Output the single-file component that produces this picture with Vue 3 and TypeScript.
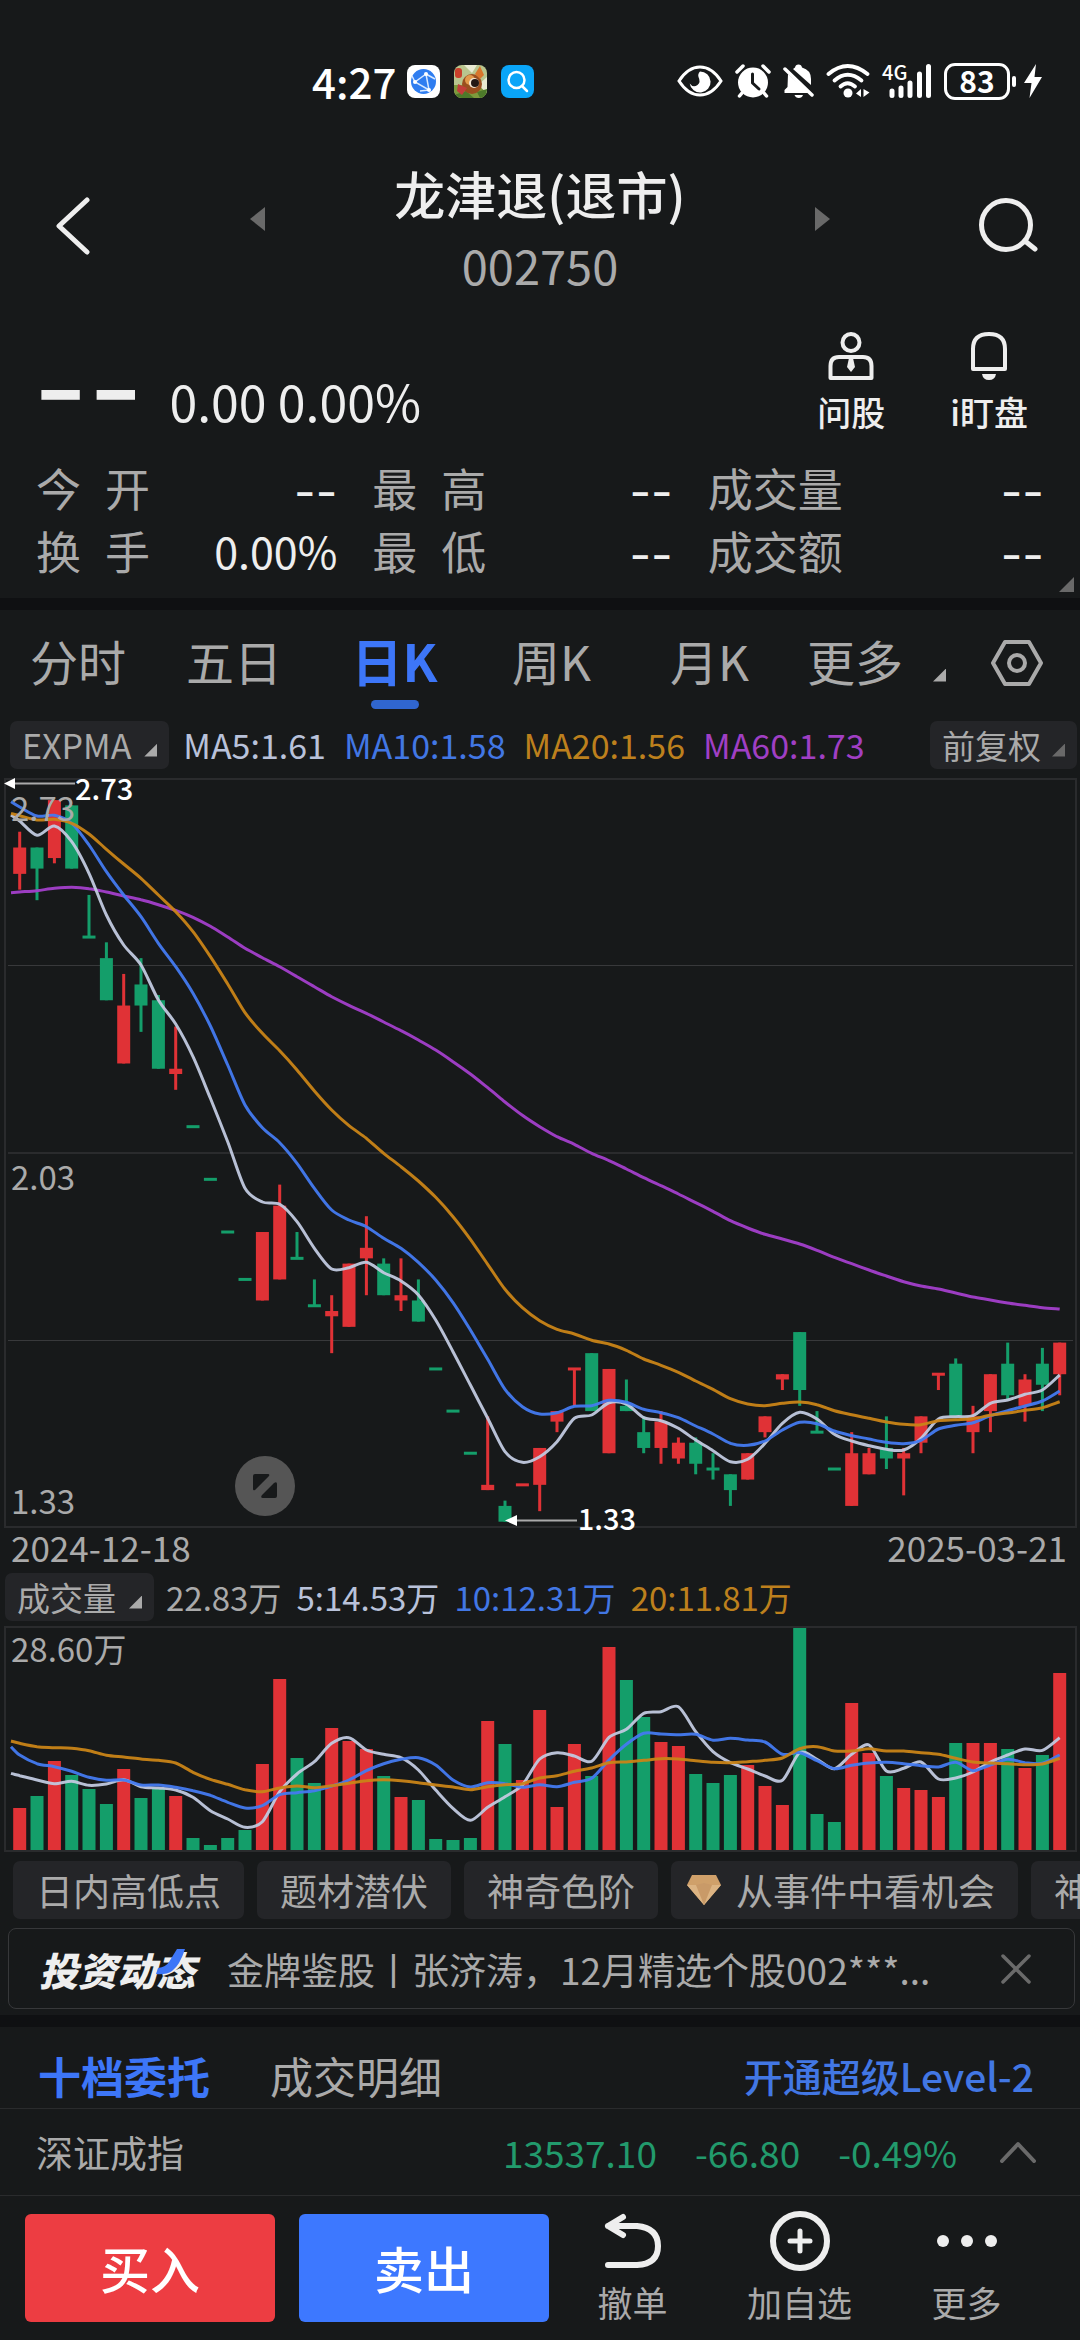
<script setup lang="ts">
type Tone = 'up' | 'down'
/** tone, body top, body bottom, high, low: in cents above the 1.33 floor */
type Candle = [Tone, number, number, number, number]

const u: Tone = 'up'
const d: Tone = 'down'

const candles: Candle[] = [
  [u, 128, 123, 131, 120], [d, 128, 124, 128, 118], [u, 137, 126, 137, 125], [d, 136, 124, 136, 124],
  [d, 111, 111, 119, 111], [d, 107, 99, 110, 99], [u, 98, 87, 104, 87], [d, 102, 98, 107, 93],
  [d, 99, 86, 100, 86], [u, 86, 85, 94, 82], [d, 75, 75, 75, 75], [d, 65, 65, 65, 65],
  [d, 55, 55, 55, 55], [d, 46, 46, 46, 46], [u, 55, 42, 55, 42], [u, 60, 46, 64, 46],
  [d, 50, 50, 55, 50], [d, 41, 41, 46, 41], [u, 40, 39, 43, 32], [u, 49, 37, 49, 37],
  [u, 52, 50, 58, 43], [d, 49, 43, 50, 43], [u, 43, 42, 50, 40], [d, 42, 38, 46, 38],
  [d, 29, 29, 29, 29], [d, 21, 21, 21, 21], [d, 13, 13, 13, 13], [u, 7, 6, 20, 6],
  [d, 3, 0, 4, 0], [u, 7, 7, 7, 7], [u, 14, 7, 14, 2], [u, 21, 19, 21, 17],
  [u, 29, 29, 29, 22], [d, 32, 21, 32, 21], [u, 29, 13, 29, 13], [d, 22, 21, 27, 21],
  [d, 17, 14, 20, 13], [u, 19, 14, 21, 11], [u, 15, 12, 16, 11], [d, 15, 11, 16, 9],
  [d, 10, 10, 13, 8], [d, 9, 6, 9, 3], [u, 13, 8, 13, 8], [u, 20, 17, 20, 16],
  [u, 28, 27, 28, 25], [d, 36, 25, 36, 22], [d, 17, 17, 21, 17], [d, 10, 10, 10, 10],
  [u, 13, 3, 17, 3], [u, 13, 9, 14, 9], [d, 14, 12, 20, 10], [u, 13, 12, 14, 5],
  [u, 20, 15, 20, 13], [u, 28, 28, 28, 25], [d, 30, 20, 31, 20], [u, 20, 17, 22, 13],
  [u, 28, 21, 28, 17], [d, 30, 24, 34, 23], [u, 27, 22, 28, 19], [d, 30, 26, 33, 21],
  [u, 34, 28, 34, 24],
]

const volumes: number[] = [
  126, 162, 267, 225, 183, 138, 243, 156, 185, 162, 36, 15, 36, 60, 258, 513, 276, 201, 366, 327, 303, 222,
  159, 150, 33, 30, 36, 387, 318, 210, 420, 129, 318, 222, 609, 510, 399, 324, 312, 228, 201, 225, 255, 192,
  135, 666, 108, 84, 441, 291, 222, 186, 180, 159, 321, 321, 321, 303, 246, 285, 531,
]

// Line levels, three units to a pixel, measured down from the panel's origin
const priceLines: { cls: string; levels: number[] }[] = [
  { cls: 'ma60', levels: [398, 396, 392, 385, 382, 386, 396, 408, 419, 434, 451, 472, 499, 531, 565, 593, 620, 650, 680, 710, 736, 760, 786, 812, 840, 870, 905, 942, 983, 1026, 1066, 1100, 1130, 1153, 1180, 1202, 1227, 1253, 1277, 1302, 1328, 1354, 1382, 1404, 1423, 1437, 1452, 1471, 1492, 1511, 1530, 1548, 1565, 1578, 1587, 1599, 1611, 1620, 1629, 1636, 1643, 1647] },
  { cls: 'ma5', levels: [165, 183, 226, 198, 245, 340, 465, 555, 615, 720, 792, 890, 1015, 1145, 1285, 1326, 1333, 1385, 1465, 1527, 1523, 1507, 1538, 1563, 1605, 1680, 1775, 1875, 1975, 2075, 2107, 2090, 2045, 1975, 1965, 1928, 1932, 1973, 1982, 2005, 2040, 2072, 2105, 2098, 2050, 1990, 1957, 1977, 2023, 2043, 2057, 2068, 2070, 2035, 1977, 1970, 1967, 1930, 1920, 1903, 1890, 1845] },
  { cls: 'ma10', levels: [125, 141, 168, 166, 190, 255, 335, 405, 470, 550, 620, 700, 798, 915, 1035, 1103, 1148, 1210, 1285, 1350, 1380, 1400, 1435, 1465, 1507, 1560, 1628, 1710, 1798, 1888, 1940, 1962, 1958, 1939, 1937, 1921, 1927, 1948, 1958, 1973, 1998, 2022, 2050, 2056, 2043, 2010, 1987, 1991, 2013, 2027, 2037, 2047, 2051, 2041, 2007, 1996, 1988, 1967, 1952, 1938, 1923, 1893] },
  { cls: 'ma20', levels: [160, 167, 180, 178, 190, 222, 268, 312, 355, 405, 455, 515, 590, 672, 758, 820, 872, 930, 993, 1050, 1097, 1135, 1180, 1220, 1263, 1312, 1370, 1438, 1513, 1588, 1643, 1682, 1708, 1722, 1741, 1752, 1771, 1797, 1816, 1837, 1863, 1888, 1916, 1932, 1937, 1930, 1926, 1934, 1952, 1964, 1975, 1986, 1993, 1994, 1982, 1979, 1976, 1966, 1959, 1951, 1943, 1925] },
]

const volumeLines: { cls: string; levels: number[] }[] = [
  { cls: 'ma5', levels: [640, 647, 660, 671, 664, 676, 672, 659, 680, 684, 690, 712, 752, 777, 802, 785, 695, 642, 605, 550, 533, 570, 583, 593, 630, 690, 745, 781, 742, 710, 675, 597, 578, 588, 604, 532, 508, 460, 455, 440, 515, 575, 608, 627, 648, 661, 578, 598, 626, 583, 555, 633, 625, 606, 657, 654, 636, 606, 585, 567, 571, 533] },
  { cls: 'ma10', levels: [560, 585, 611, 620, 634, 652, 661, 660, 675, 675, 682, 692, 706, 727, 744, 737, 704, 698, 692, 678, 660, 632, 611, 598, 593, 615, 660, 681, 668, 671, 682, 674, 680, 667, 655, 600, 553, 520, 522, 524, 523, 541, 535, 540, 546, 583, 578, 602, 626, 616, 609, 607, 611, 617, 621, 607, 632, 615, 598, 608, 610, 585] },
  { cls: 'ma20', levels: [543, 550, 560, 563, 565, 572, 586, 591, 597, 601, 609, 637, 658, 673, 689, 695, 684, 678, 683, 677, 670, 662, 659, 662, 668, 675, 681, 689, 680, 674, 671, 654, 647, 634, 624, 608, 606, 601, 596, 597, 602, 607, 608, 605, 601, 594, 566, 560, 573, 573, 566, 573, 573, 578, 583, 595, 606, 609, 611, 614, 612, 595] },
]

const round = (n: number): number => Math.round(n * 10) / 10
const centre = (i: number): number => 19.7 + (i * 1040) / 60
const priceY = (cents: number): number => 743.7 - cents * 5.267

const bars = candles.map(([tone, top, bottom, high, low], i) => {
  const flat = top === bottom
  return {
    tone,
    x: round(centre(i)) - 6.5,
    wickX: round(centre(i)) - 1.5,
    y: flat ? priceY(top) - 1.5 : priceY(top),
    h: flat ? 3 : priceY(bottom) - priceY(top),
    wickY: priceY(high),
    wickH: priceY(low) - priceY(high),
    volH: volumes[i] / 3,
  }
})

/** Smooth curve through every level; the first one sits on the left edge of the plot */
function curve(levels: number[], origin: number): string {
  const pts = levels.map((v, i) => ({ x: i === 0 ? 11 : centre(i - 1), y: v / 3 - origin }))
  let path = `M${pts[0].x} ${round(pts[0].y)}`
  for (let i = 0; i < pts.length - 1; i++) {
    const a = pts[Math.max(i - 1, 0)]
    const b = pts[i]
    const c = pts[i + 1]
    const e = pts[Math.min(i + 2, pts.length - 1)]
    path += `C${round(b.x + (c.x - a.x) / 7)} ${round(b.y + (c.y - a.y) / 7)} ${round(c.x - (e.x - b.x) / 7)} ${round(c.y - (e.y - b.y) / 7)} ${round(c.x)} ${round(c.y)}`
  }
  return path
}

const priceCurves = priceLines.map((l) => ({ cls: l.cls, path: curve(l.levels, 18) }))
const volumeCurves = volumeLines.map((l) => ({ cls: l.cls, path: curve(l.levels, 66) }))

const stats = [
  { label: '今 开', value: '--', dash: true },
  { label: '最 高', value: '--', dash: true },
  { label: '成交量', value: '--', dash: true },
  { label: '换 手', value: '0.00%', dash: false },
  { label: '最 低', value: '--', dash: true },
  { label: '成交额', value: '--', dash: true },
]
const periods = ['分时', '五日', '日K', '周K', '月K']
const tools = ['日内高低点', '题材潜伏', '神奇色阶']
</script>

<template>
  <div class="page">
    <div class="status">
      <div class="status-left">
        <span class="clock">4:27</span>
        <svg class="app" viewBox="0 0 33 33">
          <rect width="33" height="33" rx="8" fill="#fff" />
          <circle cx="16.500" cy="16.500" r="12.500" fill="#2f7df0" />
          <path d="M8 17L19 9L22 25ZM19 9L28 14M22 25L13 26M8 17L5 11" stroke="#d8e9ff" stroke-width="1.500" fill="none" />
          <circle cx="8" cy="17" r="2" fill="#fff" /><circle cx="19" cy="9" r="2" fill="#fff" /><circle cx="22" cy="25" r="2" fill="#fff" />
        </svg>
        <svg class="app" viewBox="0 0 33 33">
          <clipPath id="game"><rect width="33" height="33" rx="8" /></clipPath>
          <g clip-path="url(#game)">
            <rect width="33" height="33" fill="#b9c58e" />
            <path d="M0 20H33V33H0Z" fill="#7d9a3c" />
            <path d="M10 0L18 8L23 0ZM24 20L33 12V28Z" fill="#e9ead2" />
            <path d="M0 30L12 26L20 33H0ZM23 27L33 24V33H26Z" fill="#4d7a2a" />
            <ellipse cx="18" cy="19" rx="10" ry="10" fill="#9a4f1f" />
            <ellipse cx="16" cy="15" rx="5" ry="5" fill="#e29a4b" />
            <circle cx="20" cy="18" r="5" fill="#f3e6d2" /><circle cx="21" cy="18" r="4" fill="#231815" />
            <path d="M21 9L26 1L30 10L26 14Z" fill="#d9762c" />
            <rect x="1" y="3" width="7" height="10" rx="3" fill="#c9402b" />
            <path d="M4 19L13 23L8 30L3 26Z" fill="#c23e3a" />
          </g>
        </svg>
        <svg class="app" viewBox="0 0 33 33">
          <rect width="33" height="33" rx="8" fill="#0aa5f8" />
          <circle cx="15.500" cy="15" r="8" fill="none" stroke="#fff" stroke-width="2.500" />
          <path d="M21 21L26 26" stroke="#fff" stroke-width="2.500" stroke-linecap="round" />
        </svg>
      </div>
      <div class="status-right">
        <svg width="46" height="32" viewBox="0 0 46 32">
          <path d="M2 16Q11 2 23 2T44 16Q35 30 23 30T2 16Z" fill="none" stroke="#fff" stroke-width="3" />
          <path d="M23 6.500A10.500 10.500 0 1 1 12.700 18.500Q16 23 20.500 20Q24 17 21.500 12Q20.500 9 23 6.500Z" fill="#fff" />
        </svg>
        <svg width="36" height="34" viewBox="0 0 36 34">
          <circle cx="18" cy="18.500" r="15" fill="#fff" />
          <path d="M2 8L8 2M34 8L28 2M7 29L4.500 32M29 29L31.500 32" stroke="#fff" stroke-width="3.500" stroke-linecap="round" />
          <path d="M17.500 10V19L24 25" fill="none" stroke="#17191a" stroke-width="3" stroke-linecap="round" stroke-linejoin="round" />
        </svg>
        <svg width="31" height="34" viewBox="0 0 31 34">
          <path d="M10 5L28 21V15Q28 6 19 3.500Q18.500 0.500 15.500 0.500T12 3.500ZM5 10L26 29H1.500V26L4.500 23Z" fill="#fff" />
          <path d="M2 5L29 31" stroke="#fff" stroke-width="3.500" stroke-linecap="round" />
          <path d="M11.500 31H20Q19 34 15.800 34T11.500 31Z" fill="#fff" />
        </svg>
        <svg width="44" height="34" viewBox="0 0 44 34">
          <g fill="none" stroke="#fff" stroke-width="3.800" stroke-linecap="round">
            <path d="M2.500 10Q21.500 -6 41.500 10" /><path d="M8.500 16.500Q21.500 5 35.500 16.500" /><path d="M14.500 22.500Q21.500 16 29 22.500" />
          </g>
          <circle cx="22" cy="29" r="4.500" fill="#fff" />
          <path d="M35 25V33L30 29.500ZM37.500 25V33L43.500 28.500Z" fill="#fff" />
        </svg>
        <span class="signal">
          <span class="net">4G</span>
          <svg width="50" height="34" viewBox="0 0 50 34">
            <path d="M10 27V31.500M19 24V31.500M28 19V31.500M37.500 10V31.500M46.500 2.500V31.500" stroke="#fff" stroke-width="5" stroke-linecap="round" />
          </svg>
        </span>
        <span class="battery">83</span>
        <svg width="18" height="34" viewBox="0 0 18 34"><path d="M12 0L0 19H7.500L5.500 34L18 13H10.500Z" fill="#fff" /></svg>
      </div>
    </div>

    <header class="head">
      <button class="plain" aria-label="返回">
        <svg width="60" height="60" viewBox="0 0 60 60"><path d="M45 3L17 29L45 55" fill="none" stroke="#eee" stroke-width="5" stroke-linejoin="round" stroke-linecap="round" /></svg>
      </button>
      <div class="switcher">
        <button class="plain step" aria-label="上一只"><svg width="15" height="24" viewBox="0 0 15 24"><path d="M15 0V24L0 12Z" fill="#696969" /></svg></button>
        <div class="name">
          <h1>龙津退(退市)</h1>
          <span class="code">002750</span>
        </div>
        <button class="plain step" aria-label="下一只"><svg width="15" height="24" viewBox="0 0 15 24"><path d="M0 0V24L15 12Z" fill="#696969" /></svg></button>
      </div>
      <button class="plain" aria-label="搜索">
        <svg width="60" height="60" viewBox="0 0 60 60"><circle cx="28" cy="28" r="24.500" fill="none" stroke="#eee" stroke-width="5" /><path d="M47 44L57 52" stroke="#eee" stroke-width="5" stroke-linecap="round" /></svg>
      </button>
    </header>

    <section class="quote">
      <div class="last">
        <span class="price">--</span>
        <span class="change">0.00 0.00%</span>
      </div>
      <div class="actions">
        <button class="plain action">
          <svg width="48" height="48" viewBox="0 0 48 48" fill="none" stroke="#eee" stroke-width="4">
            <circle cx="24" cy="10.500" r="8.500" /><path d="M3.500 46V34Q3.500 25 12 25H36Q44.500 25 44.500 34V46Z" stroke-linejoin="round" /><path d="M22 26H26L28 35L24 40L20 35Z" fill="#eee" stroke="none" />
          </svg>
          问股
        </button>
        <button class="plain action">
          <svg width="48" height="48" viewBox="0 0 48 48" fill="none" stroke="#eee" stroke-width="4">
            <path d="M8 37V17Q8 2 24 2T40 17V37Z" stroke-linejoin="round" /><path d="M17 42H31Q30 48 24 48T17 42Z" fill="#eee" stroke="none" />
          </svg>
          i盯盘
        </button>
      </div>
    </section>

    <dl class="stats">
      <div v-for="s in stats" :key="s.label" class="stat">
        <dt>{{ s.label }}</dt>
        <dd :class="{ dash: s.dash }">{{ s.value }}</dd>
      </div>
      <i class="corner stats-corner"></i>
    </dl>

    <div class="band"></div>

    <nav class="periods">
      <button v-for="p in periods" :key="p" class="plain period" :class="{ on: p === '日K' }">{{ p }}</button>
      <button class="plain period more">更多<i class="corner"></i></button>
      <button class="plain gear" aria-label="设置">
        <svg width="52" height="48" viewBox="0 0 52 48" fill="none" stroke="#aaa" stroke-width="4" stroke-linejoin="round"><path d="M14 3H38L50 24L38 45H14L2 24Z" /><circle cx="26" cy="24" r="8" /></svg>
      </button>
    </nav>

    <div class="legend ma-legend">
      <button class="plain chip">EXPMA<i class="corner"></i></button>
      <div class="values">
        <span class="t5">MA5:1.61</span><span class="t10">MA10:1.58</span><span class="t20">MA20:1.56</span><span class="t60">MA60:1.73</span>
      </div>
      <button class="plain chip right">前复权<i class="corner dim"></i></button>
    </div>

    <div class="panel price-panel">
      <svg class="plot" viewBox="0 0 1080 750" preserveAspectRatio="none">
        <path d="M5 1H1076V749H5Z" fill="none" stroke="#2a2b2d" stroke-width="2" />
        <path d="M8 187.500H1073M8 562.500H1073" stroke="#38393b" />
        <path d="M8 375H1073" stroke="#2a2b2d" stroke-width="2" />
        <g v-for="(b, i) in bars" :key="i" :class="b.tone">
          <rect :x="b.wickX" :y="b.wickY" width="3" :height="b.wickH" />
          <rect :x="b.x" :y="b.y" width="13" :height="b.h" />
        </g>
        <path v-for="c in priceCurves" :key="c.cls" :d="c.path" class="line" :class="c.cls" />
        <path d="M15 5.500H75M517 742.500H577" stroke="#aaa" stroke-width="2" />
        <path d="M4 5.500L15 0V11ZM505 742.500L517 737V748Z" fill="#fff" />
      </svg>
      <span class="axis top">2.73</span>
      <span class="axis mid">2.03</span>
      <span class="axis low">1.33</span>
      <span class="mark mark-high">2.73</span>
      <span class="mark mark-low">1.33</span>
      <button class="plain expand" aria-label="放大">
        <svg width="60" height="60" viewBox="0 0 60 60"><circle cx="30" cy="30" r="30" fill="#555" /><path d="M20 18H33Q35 18 34 20L20 34Q18 35 18 33V20Q18 18 20 18ZM40 42H28Q25 42 27 39L39 27Q42 25 42 28V40Q42 42 40 42Z" fill="#17191a" /></svg>
      </button>
    </div>

    <div class="dates"><span>2024-12-18</span><span>2025-03-21</span></div>

    <div class="legend vol-legend">
      <button class="plain chip">成交量<i class="corner"></i></button>
      <div class="values">
        <span>22.83万</span><span class="t5">5:14.53万</span><span class="t10">10:12.31万</span><span class="t20">20:11.81万</span>
      </div>
    </div>

    <div class="panel vol-panel">
      <svg class="plot" viewBox="0 0 1080 226" preserveAspectRatio="none">
        <path d="M5 1H1076V225H5Z" fill="none" stroke="#2a2b2d" stroke-width="2" />
        <g v-for="(b, i) in bars" :key="i" :class="b.tone"><rect :x="b.x" :y="224 - b.volH" width="13" :height="b.volH" /></g>
        <path v-for="c in volumeCurves" :key="c.cls" :d="c.path" class="line" :class="c.cls" />
      </svg>
      <span class="axis vol">28.60万</span>
    </div>

    <div class="tools">
      <button v-for="t in tools" :key="t" class="plain tool">{{ t }}</button>
      <button class="plain tool gem">
        <svg width="34" height="30" viewBox="0 0 34 30"><path d="M5 0H29L34 10L17 30L0 10Z" fill="#cfa06a" /><path d="M0 10H34L17 30Z" fill="#dcb483" /><path d="M9 10L17 30L25 10L17 8Z" fill="#c99a68" /></svg>
        从事件中看机会
      </button>
      <button class="plain tool">神奇九转</button>
    </div>

    <div class="news">
      <span class="brand">投资动态<svg width="30" height="26" viewBox="0 0 30 26"><path d="M21 0H29Q24 16 16 22Q10 26 0 25L2 19Q10 18 13 13Z" fill="#3d76f8" /></svg></span>
      <a class="headline" href="#">金牌鉴股丨张济涛，12月精选个股002***...</a>
      <button class="plain" aria-label="关闭">
        <svg width="30" height="30" viewBox="0 0 30 30"><path d="M2 2L28 28M28 2L2 28" stroke="#6a6a6a" stroke-width="3.500" stroke-linecap="round" /></svg>
      </button>
    </div>

    <div class="band second"></div>

    <div class="order-tabs">
      <button class="plain order on">十档委托</button>
      <button class="plain order">成交明细</button>
      <a class="level" href="#">开通超级Level-2</a>
    </div>

    <div class="index">
      <span class="index-name">深证成指</span>
      <span class="index-values"><span>13537.10</span><span>-66.80</span><span>-0.49%</span></span>
      <svg width="36" height="22" viewBox="0 0 36 22"><path d="M2 20L18 3L34 20" fill="none" stroke="#6a6a6a" stroke-width="4" stroke-linejoin="round" stroke-linecap="round" /></svg>
    </div>

    <footer class="trade">
      <button class="deal buy">买入</button>
      <button class="deal sell">卖出</button>
      <div class="shortcuts">
        <button class="plain shortcut">
          <svg width="60" height="60" viewBox="0 0 60 60" fill="none" stroke="#eee" stroke-width="6" stroke-linecap="round" stroke-linejoin="round"><path d="M20 6L5 15L20 24M5 15H34Q55 17 55 35T34 54H5" /></svg>
          撤单
        </button>
        <button class="plain shortcut">
          <svg width="60" height="60" viewBox="0 0 60 60" fill="none" stroke="#eee" stroke-width="6"><circle cx="30" cy="30" r="27" /><path d="M30 20V40M20 30H40" stroke-width="5" stroke-linecap="round" /></svg>
          加自选
        </button>
        <button class="plain shortcut">
          <svg width="60" height="60" viewBox="0 0 60 60" fill="#eee"><circle cx="6" cy="30" r="6" /><circle cx="30" cy="30" r="6" /><circle cx="54" cy="30" r="6" /></svg>
          更多
        </button>
      </div>
    </footer>
  </div>
</template>

<style>
body {
  margin: 0;
  background: #17191a;
}
</style>

<style scoped>
.page {
  min-height: 100vh;
  overflow: hidden;
  background: #17191a;
  color: #aaa;
  font-family: 'Noto Sans CJK SC', 'Noto Sans', sans-serif;
  font-size: 33px;
  line-height: 48px;
}
.page svg {
  display: block;
  flex: none;
}
.plain {
  display: flex;
  align-items: center;
  padding: 0;
  border: 0;
  background: none;
  color: inherit;
  font: inherit;
  white-space: nowrap;
}
a {
  color: inherit;
  text-decoration: none;
}
.corner {
  width: 13px;
  height: 13px;
  background: #aaa;
  clip-path: polygon(100% 0, 100% 100%, 0 100%);
}
.corner.dim {
  background: #696969;
}

.status {
  display: flex;
  justify-content: space-between;
  align-items: center;
  height: 54px;
  padding: 54px 38px 0 312px;
  color: #fff;
}
.status-left {
  display: flex;
  align-items: center;
  gap: 14px;
}
.clock {
  margin-right: -3px;
  font-size: 42px;
  font-weight: 500;
}
.app {
  width: 33px;
  height: 33px;
}
.status-right {
  display: flex;
  align-items: center;
  gap: 12px;
}
.signal {
  position: relative;
}
.net {
  position: absolute;
  top: -2px;
  left: 0;
  font-size: 20px;
  font-weight: 500;
  line-height: 20px;
}
.battery {
  position: relative;
  box-sizing: border-box;
  width: 66px;
  height: 37px;
  margin-right: 2px;
  border: 3px solid #fff;
  border-radius: 11px;
  font-size: 30px;
  font-weight: 700;
  line-height: 28px;
  text-align: center;
}
.battery::after {
  content: '';
  position: absolute;
  top: 10px;
  right: -9px;
  width: 4px;
  height: 11px;
  border-radius: 2px;
  background: #fff;
}

.head {
  display: flex;
  justify-content: space-between;
  align-items: center;
  padding: 53px 42px 0;
}
.switcher {
  display: flex;
  align-items: flex-start;
  justify-content: space-between;
  flex: 0 1 580px;
}
.step {
  height: 116px;
}
.name {
  display: flex;
  flex-direction: column;
  align-items: center;
  gap: 12px;
}
h1 {
  margin: 0;
  color: #eee;
  font-size: 51px;
  font-weight: 500;
  line-height: 64px;
}
.code {
  font-size: 47px;
  line-height: 56px;
}

.quote {
  display: flex;
  justify-content: space-between;
  padding: 39px 52px 0 33px;
  color: #eee;
}
.last {
  display: flex;
  align-items: flex-end;
  gap: 26px;
  padding-bottom: 4px;
}
.price {
  font-family: Inter, sans-serif;
  font-size: 120px;
  line-height: 82px;
}
.change {
  font-size: 50px;
  line-height: 60px;
}
.actions {
  display: flex;
  gap: 65px;
}
.action {
  flex-direction: column;
  gap: 10px;
  font-size: 34px;
  font-weight: 500;
  line-height: 44px;
}

.stats {
  position: relative;
  display: grid;
  grid-template-columns: 301fr 300fr 336fr;
  column-gap: 35px;
  margin: 22px 0 0;
  padding: 0 36px 16px;
  font-size: 45px;
  line-height: 63px;
}
.stat {
  display: flex;
  justify-content: space-between;
  height: 63px;
}
dt {
  min-width: 114px;
  text-align-last: justify;
}
dd {
  margin: 0;
  color: #eee;
  font-size: 43px;
}
.dash {
  padding-top: 4px;
  font-family: Inter, sans-serif;
  font-size: 47px;
}
.stats-corner {
  position: absolute;
  right: 6px;
  bottom: 6px;
  width: 15px;
  height: 15px;
  background: #696969;
}

.band {
  height: 12px;
  background: #0f1012;
}
.band.second {
  margin-top: 6px;
}

.periods {
  display: grid;
  grid-template-columns: 156fr 156fr 165fr 149fr 167fr 198fr 89fr;
  height: 100px;
  margin-bottom: 11px;
  font-size: 48px;
}
.period {
  position: relative;
  justify-content: center;
}
.period.on {
  color: #3d76f8;
  font-size: 51px;
  font-weight: 700;
}
.period.on::after {
  content: '';
  position: absolute;
  bottom: 1px;
  left: calc(50% - 24px);
  width: 48px;
  height: 9px;
  border-radius: 5px;
  background: #3066cf;
}
.period.more {
  justify-content: flex-start;
  gap: 30px;
  padding-left: 14px;
}
.more .corner {
  margin-top: 30px;
}
.gear {
  padding-top: 6px;
}

.legend {
  display: flex;
  align-items: center;
  height: 48px;
  padding: 0 3px 0 10px;
}
.chip {
  gap: 13px;
  height: 48px;
  padding: 0 12px;
  border-radius: 7px;
  background: #242528;
}
.chip .corner {
  margin-top: 10px;
}
.values {
  display: flex;
  gap: 18px;
  padding-left: 14px;
  white-space: nowrap;
}
.ma-legend {
  font-size: 34px;
}
.chip.right {
  gap: 11px;
  margin-left: auto;
  font-size: 33px;
}
.vol-legend {
  padding-left: 5px;
}
.vol-legend .values {
  gap: 15px;
  padding-left: 12px;
}
.t5 {
  color: #b9c2da;
}
.t10 {
  color: #4277e4;
}
.t20 {
  color: #bd801d;
}
.t60 {
  color: #a03fc4;
}

.panel {
  position: relative;
}
.price-panel {
  height: 750px;
  margin-top: 9px;
}
.vol-panel {
  height: 226px;
  margin-top: 5px;
}
.plot {
  width: 100%;
  height: 100%;
}
.up {
  fill: #e03236;
}
.down {
  fill: #149e6a;
}
.line {
  fill: none;
  stroke-width: 3px;
  stroke-opacity: 0.95;
}
.ma5 {
  stroke: #c1c9df;
}
.ma10 {
  stroke: #437af0;
}
.ma20 {
  stroke: #c98417;
}
.ma60 {
  stroke: #a33fcb;
}
.axis {
  position: absolute;
  left: 11px;
}
.axis.top {
  top: 5px;
}
.axis.mid {
  top: 374px;
}
.axis.low {
  bottom: 4px;
}
.axis.vol {
  top: -2px;
}
.mark {
  position: absolute;
  color: #fff;
  font-size: 29px;
  font-weight: 500;
  line-height: 40px;
}
.mark-high {
  top: -11px;
  left: 75px;
}
.mark-low {
  bottom: -9px;
  left: 53.5%;
}
.expand {
  position: absolute;
  bottom: 12px;
  left: 235px;
}
.dates {
  display: flex;
  justify-content: space-between;
  padding: 0 13px 7px 11px;
  font-size: 35px;
  line-height: 38px;
}

.tools {
  display: flex;
  gap: 13px;
  margin-top: 9px;
  padding-left: 13px;
  overflow: hidden;
}
.tool {
  flex: none;
  height: 58px;
  padding: 0 23px;
  border-radius: 7px;
  background: #242528;
  font-size: 37px;
}
.tool.gem {
  gap: 15px;
  padding-left: 16px;
}

.news {
  display: flex;
  align-items: center;
  box-sizing: border-box;
  height: 81px;
  margin: 9px 5px 0 8px;
  padding: 0 43px 0 30px;
  border: 1px solid #37383a;
  border-radius: 8px;
}
.brand {
  position: relative;
  margin-right: 32px;
  color: #eee;
  font-size: 39px;
  font-style: italic;
  font-weight: 900;
}
.brand svg {
  position: absolute;
  top: 4px;
  right: 9px;
}
.headline {
  flex: 1;
  font-size: 37px;
  white-space: nowrap;
}

.order-tabs {
  display: flex;
  align-items: center;
  gap: 60px;
  height: 67px;
  padding: 14px 46px 0 38px;
  border-bottom: 1px solid #2a2b2d;
  font-size: 43px;
}
.order.on {
  color: #3d76f8;
  font-weight: 700;
}
.level {
  margin-left: auto;
  color: #4277e4;
  font-size: 39px;
  font-weight: 500;
}
.index {
  display: flex;
  align-items: center;
  height: 86px;
  padding: 0 44px 0 36px;
  border-bottom: 1px solid #2a2b2d;
  font-size: 37px;
}
.index-values {
  display: flex;
  gap: 38px;
  margin: 0 43px 0 auto;
  color: #229a6c;
}

.trade {
  display: flex;
  padding: 18px 30px 16px 25px;
}
.deal {
  flex: 0 1 250px;
  height: 108px;
  margin-right: 24px;
  padding: 0 0 3px;
  border: 0;
  border-radius: 6px;
  color: #fff;
  font: inherit;
  font-size: 50px;
  font-weight: 500;
}
.buy {
  background: #ed3d42;
}
.sell {
  margin-right: 0;
  background: #3d78ff;
}
.shortcuts {
  display: grid;
  flex: 1;
  grid-template-columns: repeat(3, 1fr);
  margin-top: -3px;
}
.shortcut {
  flex-direction: column;
  gap: 9px;
  font-size: 35px;
  line-height: 44px;
}
</style>
